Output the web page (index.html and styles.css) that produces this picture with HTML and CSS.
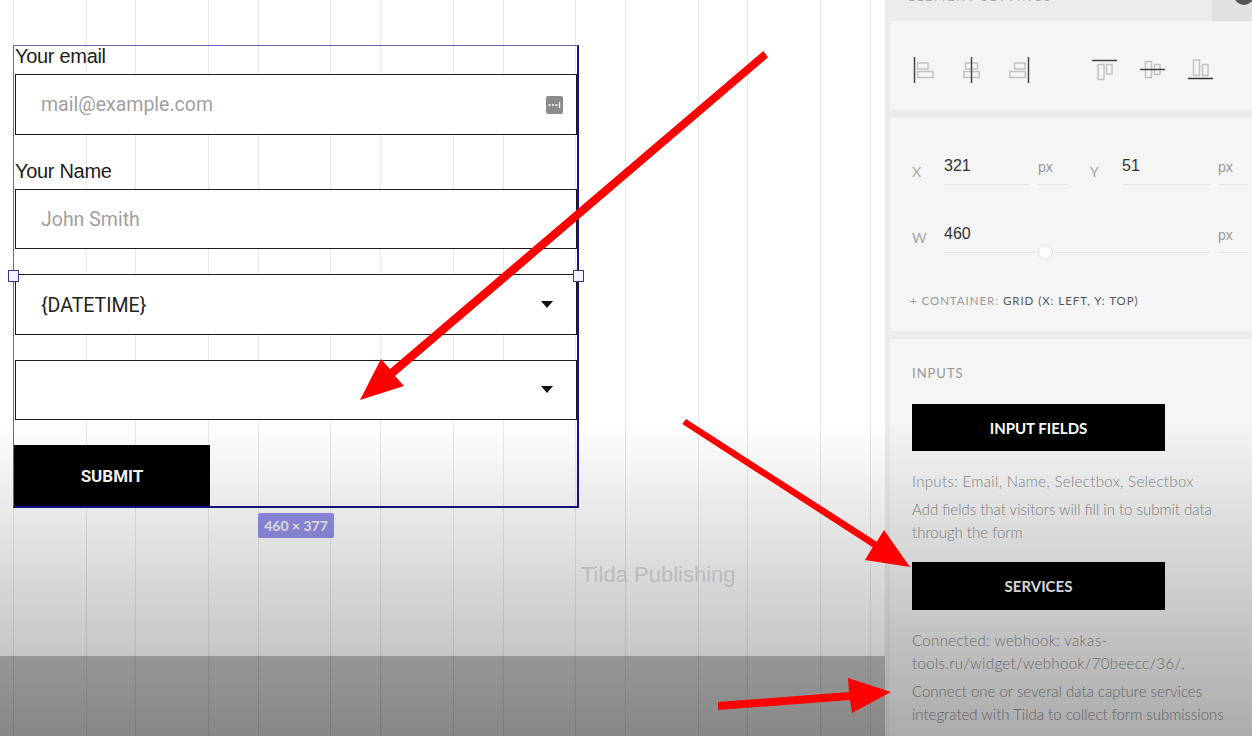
FILE: index.html
```html
<!DOCTYPE html>
<html lang="en">
  <head>
    <meta charset="UTF-8">
    <title>Form settings</title>
    <link rel="stylesheet" href="styles.css">
  </head>
  <body>
    <div class="app">
      <div class="canvas">
        <div class="grid-lines"></div>
        <form class="form-box">
          <div class="label first">Your email</div>
          <div class="field placeholder">
            mail@example.com
            <svg class="autofill" width="17" height="18" viewBox="0 0 17 18">
              <rect width="17" height="18" rx="2" fill="#8b8b8b"/>
              <circle cx="3.5" cy="9" r="1.1" fill="#fff"/>
              <circle cx="7" cy="9" r="1.1" fill="#fff"/>
              <circle cx="10.5" cy="9" r="1.1" fill="#fff"/>
              <rect x="13" y="6" width="1.2" height="6" fill="#fff"/>
            </svg>
          </div>
          <div class="label">Your Name</div>
          <div class="field placeholder short">John Smith</div>
          <div class="field select">{DATETIME}<span class="caret"></span></div>
          <div class="field select short"><span class="caret"></span></div>
          <button class="submit" type="button">SUBMIT</button>
          <span class="handle handle-left"></span>
          <span class="handle handle-right"></span>
        </form>
        <div class="size-badge">460 × 377</div>
        <div class="watermark">Tilda Publishing</div>
        <div class="dark-band"></div>
      </div>

      <aside class="sidebar">
        <div class="side-head">
          <span class="side-title">ELEMENT SETTINGS</span>
          <span class="side-corner"><span class="side-close"></span></span>
        </div>

        <div class="panel align-panel">
          <div class="align-group left-group">
            <svg width="21" height="26" viewBox="0 0 21 26"><path d="M4.500 6h10.500v6h-10.500zM4.500 14.500h15.500v6h-15.500z" fill="none" stroke="#c2c2c2" stroke-width="1.500"/><path d="M1.500 0v26" stroke="#444" stroke-width="1.500"/></svg>
            <svg width="17" height="26" viewBox="0 0 17 26"><path d="M2.500 6h12v6h-12zM0.800 14.500h15.500v6h-15.500z" fill="none" stroke="#c2c2c2" stroke-width="1.500"/><path d="M8.500 0v26" stroke="#444" stroke-width="1.500"/></svg>
            <svg width="21" height="26" viewBox="0 0 21 26"><path d="M5.500 6h10.500v6h-10.500zM0.800 14.500h15.500v6h-15.500z" fill="none" stroke="#c2c2c2" stroke-width="1.500"/><path d="M19.500 0v26" stroke="#444" stroke-width="1.500"/></svg>
          </div>
          <div class="align-group right-group">
            <svg width="25" height="22" viewBox="0 0 25 22"><path d="M6 5.500h6v15h-6zM14.500 5.500h5.500v9.500h-5.500z" fill="none" stroke="#c2c2c2" stroke-width="1.500"/><path d="M0 1.500h25" stroke="#444" stroke-width="1.500"/></svg>
            <svg width="25" height="22" viewBox="0 0 25 22"><path d="M5.500 2.500h6v16h-6zM14.500 5.500h5.500v10h-5.500z" fill="none" stroke="#c2c2c2" stroke-width="1.500"/><path d="M0 10.500h25" stroke="#444" stroke-width="1.500"/></svg>
            <svg width="25" height="22" viewBox="0 0 25 22"><path d="M5.500 1h6v15.500h-6zM14.500 5.500h5.500v11h-5.500z" fill="none" stroke="#c2c2c2" stroke-width="1.500"/><path d="M0 19.500h25" stroke="#333" stroke-width="1.500"/></svg>
          </div>
        </div>

        <div class="panel size-panel">
          <div class="xy-row">
            <span class="axis">X</span>
            <span class="value">321</span>
            <span class="unit">px</span>
            <span class="axis axis-y">Y</span>
            <span class="value value-y">51</span>
            <span class="unit">px</span>
          </div>
          <div class="w-row">
            <span class="axis">W</span>
            <span class="w-value">460<span class="slider"><span class="knob"></span></span></span>
            <span class="unit">px</span>
          </div>
          <div class="container-line">+ CONTAINER: <span class="dark">GRID (X: LEFT, Y: TOP)</span></div>
        </div>

        <div class="panel inputs-panel">
          <div class="inputs-title">INPUTS</div>
          <div class="black-btn">INPUT FIELDS</div>
          <p class="note note-first">Inputs: Email, Name, Selectbox, Selectbox</p>
          <p class="note">Add fields that visitors will fill in to submit data through the form</p>
          <div class="black-btn services">SERVICES</div>
          <p class="note note-first">Connected: webhook: vakas-<br>tools.ru/widget/webhook/70beecc/36/,</p>
          <p class="note">Connect one or several data capture services integrated with Tilda to collect form submissions</p>
        </div>
      </aside>

      <div class="fade"></div>

      <svg class="arrows" width="1252" height="736" viewBox="0 0 1252 736">
        <path fill="#ff0000" d="M763.300 51L768 57.300L395 376L404 386L360 400L381 359L390 369Z"/>
        <path fill="#ff0000" d="M686 419L682.300 424L872.700 547.300L865 560L910 567L884 530L876.700 541.700Z"/>
        <path fill="#ff0000" d="M718 702L849 692L848 678L891 692L852 713L850 700L718 710Z"/>
      </svg>
    </div>
  </body>
</html>
```

FILE: styles.css
```css
* {
    box-sizing: border-box;
}

html, body {
    margin: 0;
    height: 736px;
    overflow: hidden;
}

body {
    font-family: "Liberation Sans", Arial, sans-serif;
    background-color: #ffffff;
}

.app {
    position: relative;
    display: flex;
    width: 1252px;
    height: 736px;
    overflow: hidden;
}

.canvas {
    position: relative;
    flex: 0 0 885px;
    background-color: #ffffff;
}

.grid-lines {
    position: absolute;
    top: 0;
    bottom: 0;
    left: 13px;
    right: 0;
    background-image: repeating-linear-gradient(90deg, #e8e8f0 0 1px, transparent 1px 72.5px, #e8e8f0 72.5px 73.5px, transparent 73.5px 122.4px);
}

.form-box {
    position: absolute;
    left: 13px;
    top: 45px;
    width: 566px;
    height: 463px;
    padding: 0 0 0 1px;
    border: 1px solid #6a64b0;
    border-right: 2px solid #1b1085;
    border-bottom: 2px solid #1b1085;
    color: #222;
}

.label {
    height: 28px;
    margin-top: 26px;
    font-size: 20px;
    line-height: 20px;
    letter-spacing: -0.3px;
    color: #1c1c1c;
}

.label.first {
    margin-top: 0;
}

.field {
    position: relative;
    display: flex;
    align-items: center;
    justify-content: space-between;
    height: 61px;
    padding: 0 13px 0 25px;
    border: 1px solid #1a1a1a;
    background-color: #ffffff;
    font-family: Roboto, sans-serif;
    font-size: 19.5px;
}

.field.short {
    height: 60px;
}

.placeholder {
    color: #9f9f9f;
}

.select {
    margin-top: 25px;
    padding-top: 2px;
    padding-right: 23px;
    color: #222;
}

.caret {
    margin-left: auto;
    width: 0;
    height: 0;
    margin-top: -3px;
    border-left: 6px solid transparent;
    border-right: 6px solid transparent;
    border-top: 7px solid #111;
}

.submit {
    display: block;
    width: 196px;
    height: 61px;
    margin: 25px 0 0 -1px;
    border: none;
    background-color: #000000;
    color: #ffffff;
    font-family: Roboto, sans-serif;
    font-size: 17px;
    font-weight: 700;
}

.handle {
    position: absolute;
    top: 224px;
    width: 11px;
    height: 12px;
    border: 1px solid #3a3490;
    background-color: #f4f4ff;
}

.handle-left {
    left: -6px;
}

.handle-right {
    right: -7px;
}

.size-badge {
    position: absolute;
    left: 258px;
    top: 513px;
    width: 76px;
    height: 25px;
    border-radius: 2px;
    background-color: #9490ea;
    color: #f2f2f2;
    font-family: Lato, sans-serif;
    font-size: 14px;
    font-weight: 700;
    line-height: 25px;
    text-align: center;
}

.watermark {
    position: absolute;
    left: 581px;
    top: 562px;
    font-size: 22px;
    color: #dcdcdc;
}

.dark-band {
    position: absolute;
    left: 0;
    right: 0;
    top: 656px;
    bottom: 0;
    background-color: rgba(0, 0, 0, 0.24);
}

.sidebar {
    flex: 1;
    display: flex;
    flex-direction: column;
    gap: 8px;
    padding-left: 5px;
    background-color: #ececec;
    color: #888;
    font-family: Lato, sans-serif;
}

.side-head {
    display: flex;
    justify-content: space-between;
    height: 13px;
    padding-left: 18px;
    font-size: 12px;
    letter-spacing: 2px;
    line-height: 14px;
    color: #aaa;
}

.side-title {
    margin-top: -10px;
}

.side-corner {
    position: relative;
    width: 40px;
    height: 21px;
    overflow: hidden;
    background-color: #e2e2e2;
}

.side-close {
    position: absolute;
    left: 22px;
    top: -15px;
    width: 20px;
    height: 20px;
    border-radius: 50%;
    background-color: #555;
}

.panel {
    background-color: #f5f5f5;
}

.align-panel {
    display: flex;
    align-items: center;
    height: 89px;
    padding: 9px 0 0 23px;
}

.align-group {
    display: flex;
    align-items: center;
}

.left-group {
    gap: 29px;
}

.right-group {
    gap: 23px;
    margin-left: 62px;
}

.size-panel {
    height: 213px;
    padding: 36px 0 0 22px;
}

.xy-row, .w-row {
    display: flex;
    align-items: flex-end;
    height: 31px;
}

.w-row {
    margin-top: 37px;
}

.axis {
    width: 32px;
    font-size: 14px;
    color: #a5a5a5;
    padding-bottom: 5px;
}

.w-row .axis {
    padding-bottom: 7px;
}

.axis-y {
    margin-left: 22px;
}

.value, .w-value {
    position: relative;
    height: 100%;
    border-bottom: 1px solid #e8e8e8;
    font-family: "Liberation Sans", sans-serif;
    font-size: 16px;
    line-height: 24px;
    color: #333;
}

.value {
    width: 86px;
}

.value-y {
    width: 88px;
}

.w-value {
    width: 266px;
    border-bottom: none;
}

.unit {
    margin-left: 8px;
    width: 30px;
    height: 100%;
    border-bottom: 1px solid #e8e8e8;
    font-family: "Liberation Sans", sans-serif;
    font-size: 14px;
    line-height: 26px;
    color: #999;
}

.slider {
    position: absolute;
    left: 0;
    right: 0;
    bottom: 0;
    height: 1px;
    background-color: #e6e6e6;
}

.knob {
    position: absolute;
    left: 94px;
    top: -7px;
    width: 15px;
    height: 15px;
    border: 1px solid #ddd;
    border-radius: 50%;
    background-color: #ffffff;
}

.container-line {
    margin-top: 41px;
    margin-left: -2px;
    font-size: 11.5px;
    letter-spacing: 0.95px;
    color: #999;
}

.dark {
    color: #555;
}

.inputs-panel {
    flex: 1;
    padding: 26px 0 0 22px;
}

.inputs-title {
    font-size: 13px;
    letter-spacing: 1px;
    line-height: 16px;
    color: #999;
}

.black-btn {
    width: 253px;
    height: 47px;
    margin-top: 23px;
    background-color: #000000;
    color: #ffffff;
    font-size: 15px;
    font-weight: 700;
    line-height: 48px;
    text-align: center;
}

.services {
    margin-top: 18px;
    height: 48px;
}

.note {
    width: 325px;
    margin: 0;
    font-size: 15px;
    font-weight: 300;
    line-height: 23px;
    color: #888;
    padding-top: 5px;
}

.note-first {
    padding-top: 0;
    margin-top: 19px;
    letter-spacing: 0.35px;
}

.fade {
    position: absolute;
    left: 0;
    right: 0;
    top: 420px;
    bottom: 0;
    background-image: linear-gradient(rgba(0, 0, 0, 0), rgba(0, 0, 0, 0.3));
    pointer-events: none;
}

.arrows {
    position: absolute;
    left: 0;
    top: 0;
    pointer-events: none;
}
```
